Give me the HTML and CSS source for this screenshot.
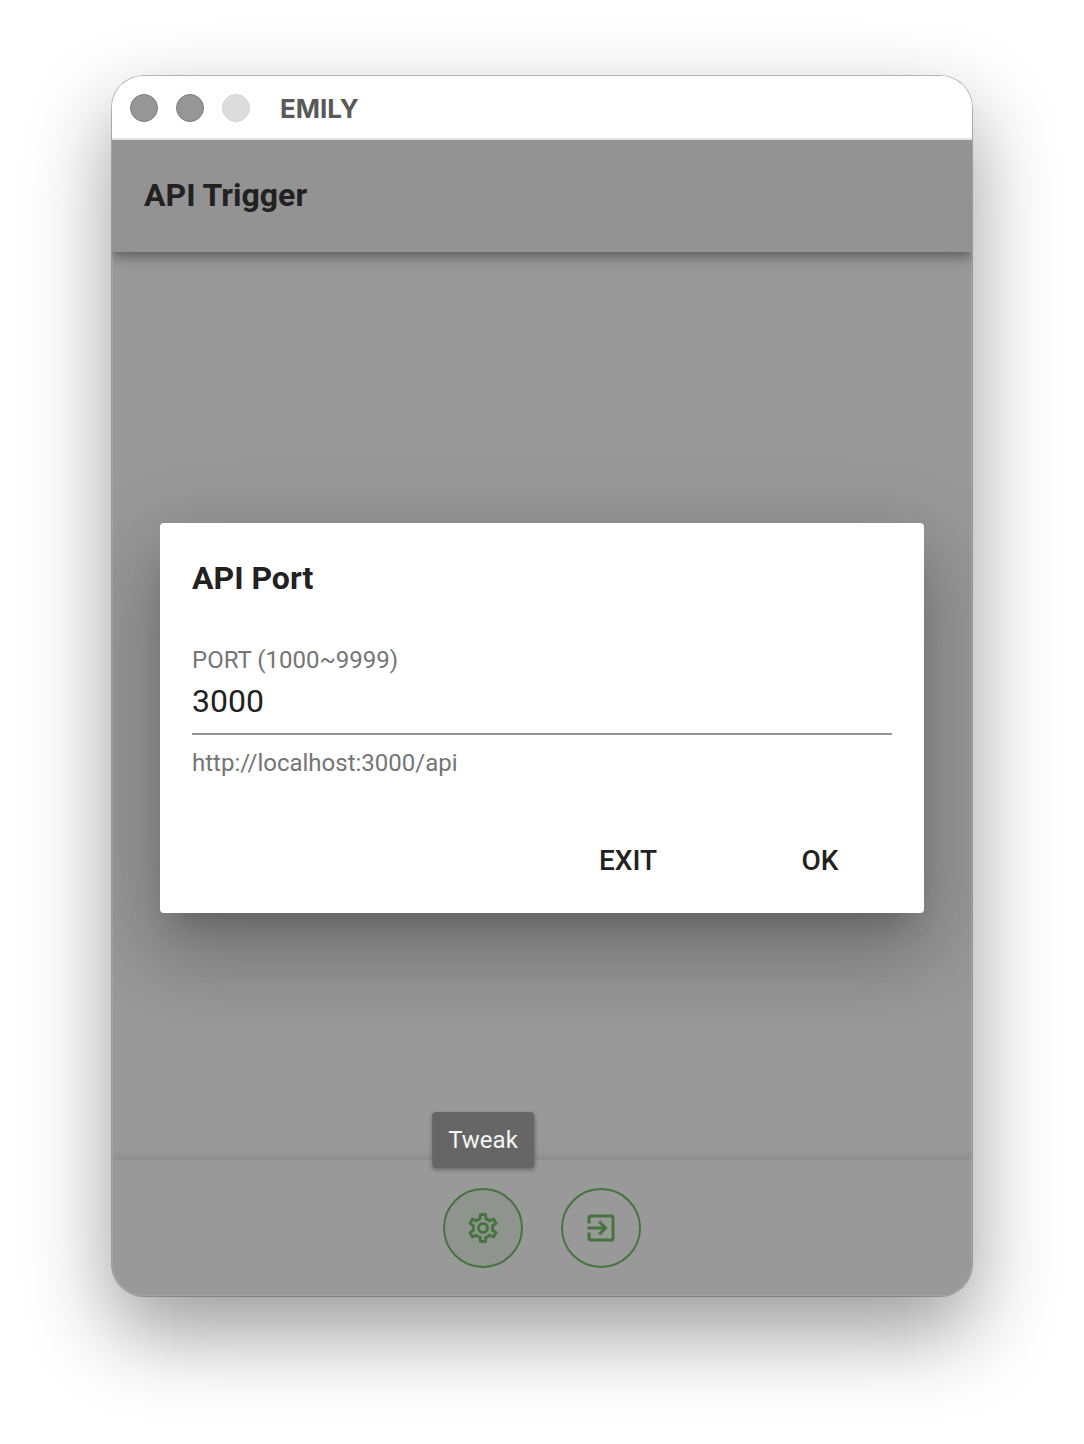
FILE: index.html
```html
<!DOCTYPE html>
<html lang="en">
<head>
    <meta charset="UTF-8">
    <meta name="viewport" content="width=device-width, initial-scale=1.0">
    <title>EMILY</title>
    <link rel="stylesheet" href="styles.css">
</head>
<body>
    <div class="window">
        <div class="titlebar">
            <span class="light"></span>
            <span class="light"></span>
            <span class="light light-disabled"></span>
            <span class="window-title">EMILY</span>
        </div>

        <div class="app">
            <header class="app-header">
                <h1>API Trigger</h1>
            </header>

            <main class="app-body"></main>

            <footer class="app-footer">
                <div class="action">
                    <button type="button" class="icon-button active" aria-label="Tweak">
                        <svg viewBox="0 0 24 24" aria-hidden="true"><path d="M12,8A4,4 0 0,1 16,12A4,4 0 0,1 12,16A4,4 0 0,1 8,12A4,4 0 0,1 12,8M12,10A2,2 0 0,0 10,12A2,2 0 0,0 12,14A2,2 0 0,0 14,12A2,2 0 0,0 12,10M10,22C9.75,22 9.54,21.82 9.5,21.58L9.13,18.93C8.5,18.68 7.96,18.34 7.44,17.94L4.95,18.95C4.73,19.03 4.46,18.95 4.34,18.73L2.34,15.27C2.21,15.05 2.27,14.78 2.46,14.63L4.57,12.97L4.5,12L4.57,11L2.46,9.37C2.27,9.22 2.21,8.95 2.34,8.73L4.34,5.27C4.46,5.05 4.73,4.96 4.95,5.05L7.44,6.05C7.96,5.66 8.5,5.32 9.13,5.07L9.5,2.42C9.54,2.18 9.75,2 10,2H14C14.25,2 14.46,2.18 14.5,2.42L14.87,5.07C15.5,5.32 16.04,5.66 16.56,6.05L19.05,5.05C19.27,4.96 19.54,5.05 19.66,5.27L21.66,8.73C21.79,8.95 21.73,9.22 21.54,9.37L19.43,11L19.5,12L19.43,13L21.54,14.63C21.73,14.78 21.79,15.05 21.66,15.27L19.66,18.73C19.54,18.95 19.27,19.04 19.05,18.95L16.56,17.95C16.04,18.34 15.5,18.68 14.87,18.93L14.5,21.58C14.46,21.82 14.25,22 14,22H10M11.25,4L10.88,6.61C9.68,6.86 8.62,7.5 7.85,8.39L5.44,7.35L4.69,8.65L6.8,10.2C6.4,11.37 6.4,12.64 6.8,13.8L4.68,15.36L5.43,16.66L7.86,15.62C8.63,16.5 9.68,17.14 10.87,17.38L11.24,20H12.76L13.13,17.39C14.32,17.14 15.37,16.5 16.14,15.62L18.57,16.66L19.32,15.36L17.2,13.81C17.6,12.64 17.6,11.37 17.2,10.2L19.31,8.65L18.56,7.35L16.15,8.39C15.38,7.5 14.32,6.86 13.12,6.62L12.75,4H11.25Z"/></svg>
                    </button>
                    <span class="tooltip" role="tooltip">Tweak</span>
                </div>
                <div class="action">
                    <button type="button" class="icon-button" aria-label="Exit">
                        <svg viewBox="0 0 24 24" aria-hidden="true"><path d="M19,3H5C3.89,3 3,3.89 3,5V9H5V5H19V19H5V15H3V19A2,2 0 0,0 5,21H19A2,2 0 0,0 21,19V5C21,3.89 20.1,3 19,3M10.08,15.58L11.5,17L16.5,12L11.5,7L10.08,8.41L12.67,11H3V13H12.67L10.08,15.58Z"/></svg>
                    </button>
                </div>
            </footer>

            <form class="dialog" role="dialog" aria-labelledby="dialog-title">
                <h2 id="dialog-title">API Port</h2>
                <div class="field">
                    <label for="port">PORT (1000~9999)</label>
                    <input type="text" id="port" name="port" value="3000" inputmode="numeric" aria-describedby="port-hint">
                    <p id="port-hint">http://localhost:3000/api</p>
                </div>
                <div class="dialog-actions">
                    <button type="button">EXIT</button>
                    <button type="submit">OK</button>
                </div>
            </form>
        </div>
    </div>

    <script>
        const port = document.getElementById('port');
        const hint = document.getElementById('port-hint');

        port.addEventListener('input', () => {
            hint.textContent = `http://localhost:${port.value}/api`;
        });

        document.querySelector('.dialog').addEventListener('submit', (e) => {
            e.preventDefault();
        });
    </script>
</body>
</html>
```

FILE: styles.css
```css
* {
    box-sizing: border-box;
}
body {
    display: flex;
    min-height: 100vh;
    margin: 0;
    padding: 76px 112px 148px;
    background-color: #fff;
    color: #212121;
    font-family: Roboto, sans-serif;
}
h1, h2, p {
    margin: 0;
}
h1, h2 {
    font-size: 32px;
    line-height: 40px;
    font-weight: 700;
}
button {
    font-family: inherit;
    cursor: pointer;
}

/* Window frame */
.window {
    flex: 1;
    display: flex;
    flex-direction: column;
    min-width: 0;
    border-radius: 32px;
    overflow: hidden;
    box-shadow: 0 0 0 1px rgba(0, 0, 0, 0.25), 0 36px 84px rgba(0, 0, 0, 0.4);
}
.titlebar {
    position: relative;
    z-index: 1;
    display: flex;
    align-items: center;
    gap: 18px;
    height: 64px;
    padding: 0 18px;
    background-color: #fff;
    box-shadow: inset 0 -2px #e3e3e3;
}
.light {
    width: 28px;
    height: 28px;
    border: 1px solid #7c7c7c;
    border-radius: 50%;
    background-color: #969696;
}
.light-disabled {
    border-color: #d0d0d0;
    background-color: #dcdcdc;
}
.window-title {
    margin-left: 12px;
    color: #595959;
    font-family: Inter, sans-serif;
    font-size: 26px;
    font-weight: 700;
}

/* App */
.app {
    position: relative;
    flex: 1;
    display: flex;
    flex-direction: column;
    background-color: #999;
    box-shadow: inset 0 0 0 1px #a3a3a3;
}
.app-header {
    display: flex;
    align-items: center;
    height: 112px;
    padding: 0 32px 2px;
    background-color: #939393;
    box-shadow: 0 4px 8px -2px rgba(0, 0, 0, 0.2), 0 8px 10px rgba(0, 0, 0, 0.14), 0 2px 20px rgba(0, 0, 0, 0.12);
}
.app-body {
    flex: 1;
}
.app-footer {
    display: flex;
    align-items: center;
    justify-content: center;
    gap: 38px;
    height: 136px;
    border: 1px solid #a3a3a3;
    border-top: 0;
    border-radius: 0 0 32px 32px;
    background-color: #999;
    box-shadow: 0 -2px 12px rgba(0, 0, 0, 0.12);
}
.action {
    position: relative;
}
.icon-button {
    display: flex;
    align-items: center;
    justify-content: center;
    width: 80px;
    height: 80px;
    padding: 0;
    border: 2px solid #46743f;
    border-radius: 50%;
    background-color: transparent;
    color: #46743f;
}
.icon-button.active {
    background-color: #8f958e;
}
.icon-button svg {
    width: 36px;
    height: 36px;
    fill: currentColor;
}
.tooltip {
    position: absolute;
    bottom: 100px;
    left: 50%;
    transform: translateX(-50%);
    padding: 12px 16px;
    border-radius: 4px;
    background-color: #666;
    color: #f5f5f5;
    font-size: 24px;
    line-height: 32px;
    box-shadow: 0 2px 4px rgba(0, 0, 0, 0.3);
}

/* Dialog */
.dialog {
    position: absolute;
    top: 50%;
    left: 48px;
    right: 48px;
    transform: translateY(-50%);
    border-radius: 4px;
    background-color: #fff;
    box-shadow: 0 22px 30px -14px rgba(0, 0, 0, 0.2), 0 48px 76px 6px rgba(0, 0, 0, 0.14), 0 18px 92px 16px rgba(0, 0, 0, 0.12);
}
.dialog h2 {
    padding: 35px 32px 36px;
}
.field {
    display: flex;
    flex-direction: column;
    padding: 12px 32px 48px;
    color: #757575;
    font-size: 24px;
    line-height: 28px;
}
.field input {
    width: 100%;
    height: 61px;
    padding: 0 0 5px;
    border: 0;
    border-bottom: 2px solid #949494;
    border-radius: 0;
    outline: 0;
    background: none;
    color: #212121;
    font-family: inherit;
    font-size: 32px;
}
.field p {
    padding-top: 14px;
}
.dialog-actions {
    display: flex;
    justify-content: flex-end;
    gap: 16px;
    padding: 0 16px 16px;
}
.dialog-actions button {
    width: 176px;
    height: 72px;
    padding: 0 0 2px;
    border: 0;
    border-radius: 4px;
    background: none;
    color: #212121;
    font-size: 28px;
    font-weight: 500;
}
```
